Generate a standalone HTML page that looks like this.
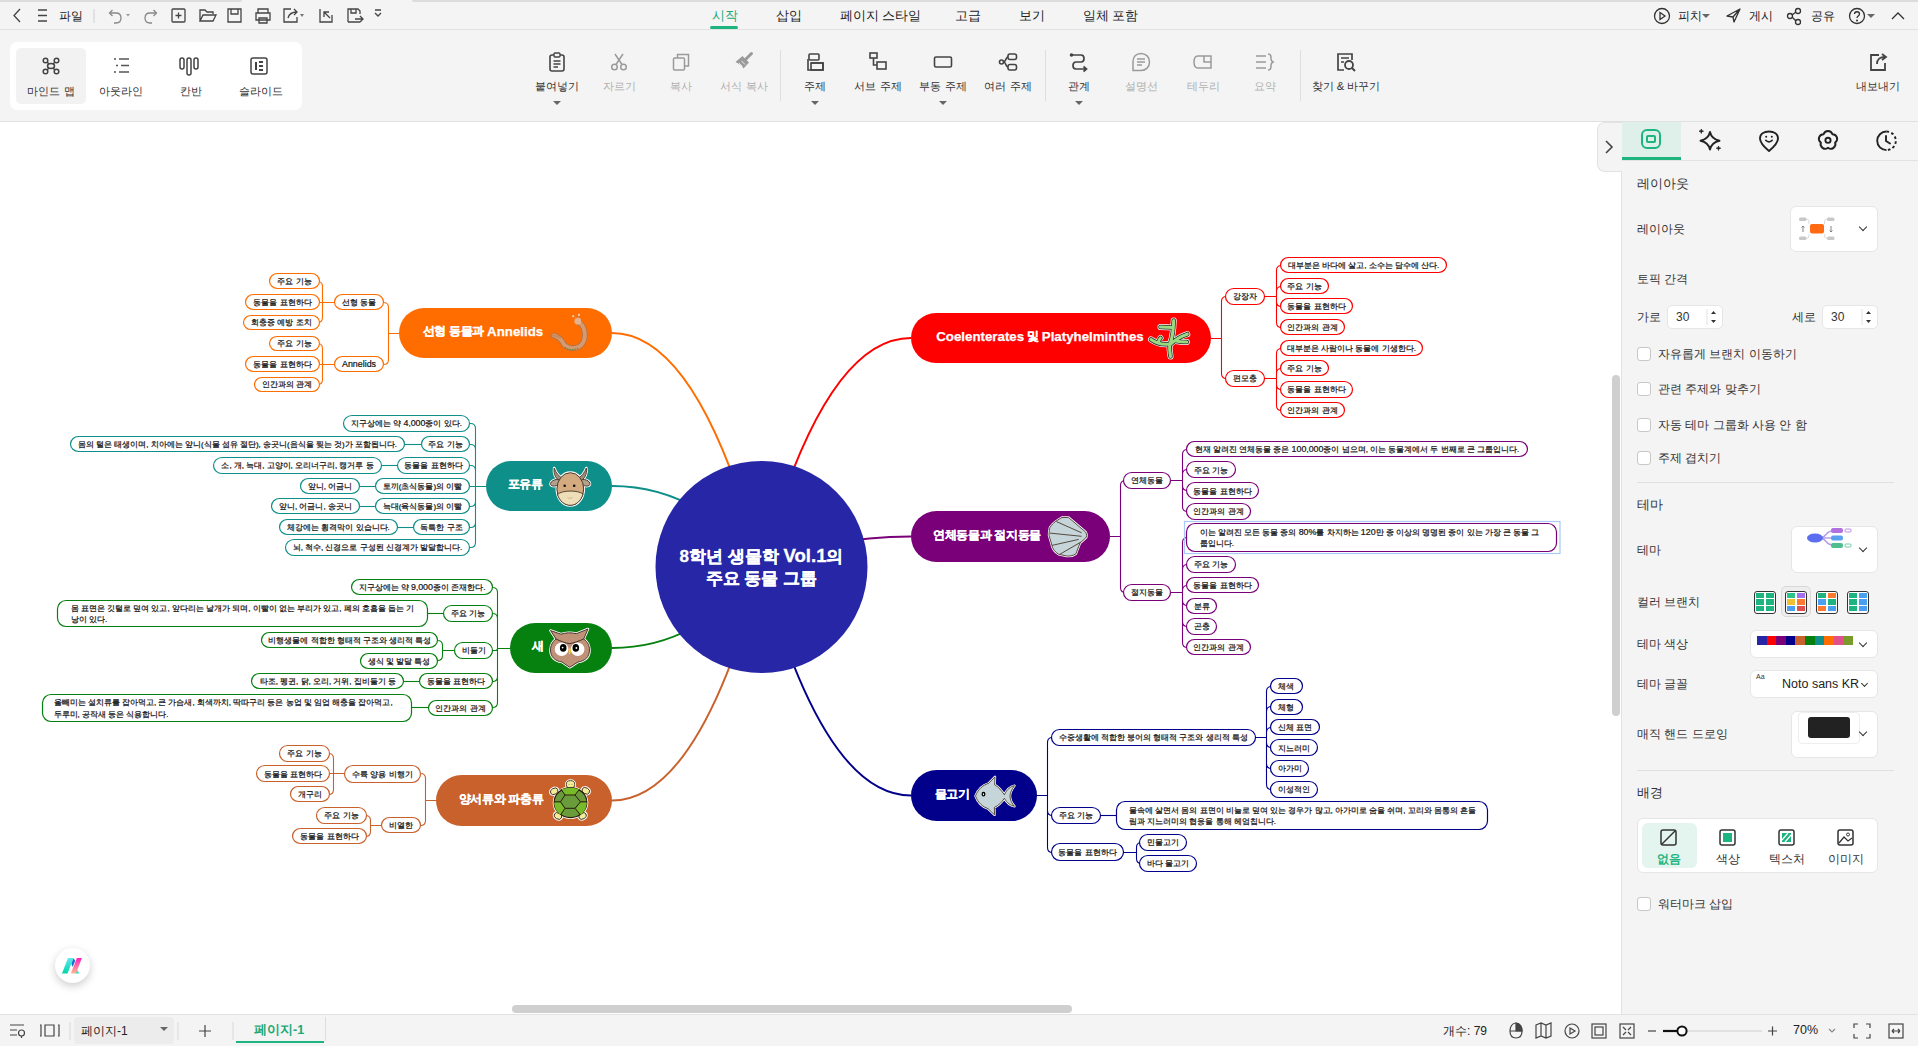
<!DOCTYPE html>
<html><head><meta charset="utf-8"><title>mindmap</title><style>
*{box-sizing:border-box;margin:0;padding:0}
html,body{width:1918px;height:1046px;overflow:hidden;background:#fff;font-family:"Liberation Sans", sans-serif;color:#333}
.abs{position:absolute}
#top{position:absolute;left:0;top:0;width:1918px;height:122px;background:#f4f4f4;border-bottom:1px solid #e0e0e0}
#topline{position:absolute;left:0;top:0;width:242px;height:2px;background:#dcdcdc;border-radius:0 0 3px 0}
#topline2{position:absolute;left:412px;top:0;width:1506px;height:2px;background:#dcdcdc;border-radius:0 0 0 3px}
#menusep{position:absolute;left:0;top:29px;width:1918px;height:1px;background:#e2e2e2}
.tab{position:absolute;top:8px;font-size:12.5px;color:#222;white-space:nowrap}
.ri{position:absolute;top:51px;width:80px;text-align:center;font-size:11.3px}
.ri .ico{display:block;margin:0 auto}
.ri .lbl{margin-top:6px;white-space:nowrap}
.caret{width:0;height:0;border-left:4px solid transparent;border-right:4px solid transparent;border-top:4px solid #666;margin:7px auto 0}
.vsep{position:absolute;top:50px;width:1px;height:51px;background:#dedede}
#panel{position:absolute;left:1621px;top:122px;width:297px;height:892px;background:#f4f4f4;border-left:1px solid #e2e2e2}
#status{position:absolute;left:0;top:1014px;width:1918px;height:32px;background:#f4f4f4;border-top:1px solid #e2e2e2}
.pl{position:absolute;font-size:12px;color:#333;white-space:nowrap}
.cb{position:absolute;width:14px;height:14px;border:1px solid #c8c8c8;border-radius:3px;background:#fff}
.box{position:absolute;background:#fff;border:1px solid #e6e6e6;border-radius:6px}
.chev{position:absolute;width:6px;height:6px;border-right:1.5px solid #333;border-bottom:1.5px solid #333;transform:rotate(45deg)}
</style></head>
<body>
<div id="top"><div id="topline"></div><div id="topline2"></div><div id="menusep"></div>
<svg class="abs" style="left:8px;top:5px" width="380" height="22" fill="none" stroke="#444" stroke-width="1.3">
<path d="M12,4 L6,10.5 L12,17"/>
<path d="M30,5 H39 M30,10.5 H39 M30,16 H39"/>
<path d="M86,4 V18" stroke="#d8d8d8"/>
<path d="M102,8 H108 C111,8 113,10 113,13 C113,16 111,18 108,18 H106" stroke="#888"/><path d="M104.5,5 L101.5,8 L104.5,11" stroke="#888"/><path d="M118,9 L122,9 L120,11.5Z" fill="#999" stroke="none"/>
<path d="M148,8 H142 C139,8 137,10 137,13 C137,16 139,18 142,18 H144" stroke="#888"/><path d="M145.5,5 L148.5,8 L145.5,11" stroke="#888"/>
<rect x="164" y="4" width="13" height="13" rx="1"/><path d="M170.5,7.5 V13.5 M167.5,10.5 H173.5"/>
<path d="M192,16 V5 H197 L199,7 H205 V9 M192,16 L195,10 H208 L205,16Z"/>
<path d="M220,4 H233 V17 H220Z M223,4 V9 H230 V4"/>
<path d="M250,8 V4 H260 V8 M248,8 H262 V15 H248Z M251,13 H259 V18 H251Z"/>
<path d="M283,4 H276 V17 H289 V12 M280,13 C281,9 283,7 289,7 M286,4 L289,7 L286,10"/><path d="M292,9 L296,9 L294,12Z" fill="#777" stroke="none"/>
<path d="M312,4 V17 H324 V10 M316,7 L322,13 M316,12 V7 H321" />
<path d="M340,17 V4 H350 L352,6 V9 M340,17 H352 M343,4 V8 H348 V4 M347,14 H355 M352,11 L355,14 L352,17"/>
<path d="M367,8 L370,11 L373,8 M367,5 H373"/>
</svg>
<div class="tab" style="left:59px;top:8px;font-size:12px">파일</div>
<div class="tab" style="left:712px;color:#1aa876">시작</div>
<div class="tab" style="left:776px;color:#222">삽입</div>
<div class="tab" style="left:840px;color:#222">페이지 스타일</div>
<div class="tab" style="left:955px;color:#222">고급</div>
<div class="tab" style="left:1019px;color:#222">보기</div>
<div class="tab" style="left:1083px;color:#222">일체 포함</div>
<div class="abs" style="left:710px;top:26px;width:28px;height:3px;border-radius:2px;background:#1db47f"></div>
<svg class="abs" style="left:1650px;top:5px" width="260" height="22" fill="none" stroke="#333" stroke-width="1.3">
<circle cx="12" cy="11" r="7.5"/><path d="M10,7.5 L15,11 L10,14.5Z"/>
<path d="M77,11 L90,4 L84,17 L83,12Z M83,12 L90,4" stroke-linejoin="round"/>
<circle cx="140" cy="11" r="2.5"/><circle cx="148" cy="6" r="2.5"/><circle cx="148" cy="17" r="2.5"/><path d="M142,10 L146,7 M142,12 L146,16"/>
<circle cx="207" cy="11" r="7.5"/><path d="M204.5,9 C204.5,6 209.5,6 209.5,9 C209.5,11 207,11 207,13"/><circle cx="207" cy="15.5" r="0.4" fill="#333"/>
<path d="M242,14 L248,8 L254,14"/>
</svg>
<svg class="abs" style="left:1702px;top:14px" width="8" height="5"><path d="M0,0 H8 L4,4Z" fill="#666"/></svg>
<svg class="abs" style="left:1867px;top:14px" width="8" height="5"><path d="M0,0 H8 L4,4Z" fill="#666"/></svg>
<div class="tab" style="left:1678px;top:8px;font-size:12px">피치</div>
<div class="tab" style="left:1749px;top:8px;font-size:12px">게시</div>
<div class="tab" style="left:1811px;top:8px;font-size:12px">공유</div>
<div class="abs" style="left:10px;top:42px;width:292px;height:68px;background:#fff;border-radius:7px"></div>
<div class="abs" style="left:16px;top:48px;width:70px;height:56px;background:#f2f2f2;border-radius:5px"></div>
<svg class="abs" style="left:30px;top:55px" width="260" height="22" fill="none" stroke="#444" stroke-width="1.5">
<ellipse cx="21" cy="11" rx="3.5" ry="2.5"/><circle cx="15.5" cy="5.5" r="2.3"/><circle cx="26.5" cy="5.5" r="2.3"/><circle cx="15.5" cy="16.5" r="2.3"/><circle cx="26.5" cy="16.5" r="2.3"/><path d="M17,7 L19,9 M25,7 L23,9 M17,15 L19,13 M25,15 L23,13"/>
<path d="M84,4 H86 M89,4 H99 M86,10.5 H88 M91,10.5 H99 M84,17 H86 M89,17 H99" stroke-width="1.7" stroke="#555"/>
<rect x="150" y="3" width="4" height="11" rx="2"/><rect x="157" y="3" width="4" height="17" rx="2"/><rect x="164" y="3" width="4" height="11" rx="2"/>
<rect x="221" y="3" width="16" height="16" rx="2"/><path d="M226,7 V15 M229,7 H233 M229,11 H233 M229,15 H233" stroke-width="2"/>
</svg>
<div class="abs" style="left:11px;top:84px;width:80px;text-align:center;font-size:11.3px;color:#333">마인드 맵</div>
<div class="abs" style="left:81px;top:84px;width:80px;text-align:center;font-size:11.3px;color:#333">아웃라인</div>
<div class="abs" style="left:151px;top:84px;width:80px;text-align:center;font-size:11.3px;color:#333">칸반</div>
<div class="abs" style="left:221px;top:84px;width:80px;text-align:center;font-size:11.3px;color:#333">슬라이드</div>
<div class="ri" style="left:517px;color:#333"><svg width="22" height="22" viewBox="0 0 22 22" class="ico" style="stroke:#444"><rect x="4" y="4" width="14" height="16" rx="2" fill="none" stroke-width="1.6"/><rect x="8" y="2" width="6" height="4" rx="1" fill="#f4f4f4" stroke-width="1.4"/><path d="M7.5,10 H14.5 M7.5,13 H14.5 M7.5,16 H12" stroke-width="1.4"/></svg><div class="lbl">붙여넣기</div><div class="caret"></div></div>
<div class="ri" style="left:579px;color:#b0b0b0"><svg width="22" height="22" viewBox="0 0 22 22" class="ico" style="stroke:#9a9a9a"><circle cx="6.5" cy="16" r="2.8" fill="none" stroke-width="1.5"/><circle cx="15.5" cy="16" r="2.8" fill="none" stroke-width="1.5"/><path d="M8,13.5 L15,3 M14,13.5 L7,3" stroke-width="1.5"/></svg><div class="lbl">자르기</div></div>
<div class="ri" style="left:641px;color:#b0b0b0"><svg width="22" height="22" viewBox="0 0 22 22" class="ico" style="stroke:#9a9a9a"><rect x="3.5" y="7" width="11" height="12" rx="1" fill="none" stroke-width="1.5"/><path d="M7.5,7 V3.5 H18.5 V15 H14.5" fill="none" stroke-width="1.5"/></svg><div class="lbl">복사</div></div>
<div class="ri" style="left:704px;color:#b0b0b0"><svg width="22" height="22" viewBox="0 0 22 22" class="ico" style="stroke:#9a9a9a"><path d="M2.5,11 L9.5,5 L16,11.5 L10.5,17.5 C9,15 6.5,13 2.5,11Z" fill="#9a9a9a" stroke="none"/><path d="M13,8 L18.5,2.5" stroke="#9a9a9a" stroke-width="3" stroke-linecap="round"/><path d="M6,12 L9.5,15.5 M8.5,10 L12,13.5" stroke="#f4f4f4" stroke-width="0.9"/></svg><div class="lbl">서식 복사</div></div>
<div class="ri" style="left:775px;color:#333"><svg width="22" height="22" viewBox="0 0 22 22" class="ico" style="stroke:#444"><rect x="5" y="3" width="10" height="6" rx="1" fill="none" stroke-width="1.6"/><path d="M4,8 V19 H19 V12 H7" fill="none" stroke-width="1.6"/><rect x="7" y="12" width="12" height="7" fill="none" stroke-width="1.6"/></svg><div class="lbl">주제</div><div class="caret"></div></div>
<div class="ri" style="left:838px;color:#333"><svg width="22" height="22" viewBox="0 0 22 22" class="ico" style="stroke:#444"><rect x="3" y="2" width="7" height="5" fill="none" stroke-width="1.6"/><path d="M6.5,7 V14 H10" fill="none" stroke-width="1.6"/><rect x="10" y="11" width="9" height="7" fill="none" stroke-width="1.6"/></svg><div class="lbl">서브 주제</div></div>
<div class="ri" style="left:903px;color:#333"><svg width="22" height="22" viewBox="0 0 22 22" class="ico" style="stroke:#444"><rect x="2.5" y="6" width="17" height="10" rx="1.5" fill="none" stroke-width="1.6"/></svg><div class="lbl">부동 주제</div><div class="caret"></div></div>
<div class="ri" style="left:968px;color:#333"><svg width="22" height="22" viewBox="0 0 22 22" class="ico" style="stroke:#444"><rect x="11" y="3" width="8.5" height="5.5" rx="2" fill="none" stroke-width="1.6"/><rect x="11" y="13.5" width="8.5" height="5.5" rx="2" fill="none" stroke-width="1.6"/><circle cx="4.5" cy="11" r="2" fill="none" stroke-width="1.6"/><path d="M6.5,11 C9,11 9,5.8 11,5.8 M6.5,11 C9,11 9,16.2 11,16.2" fill="none" stroke-width="1.6"/></svg><div class="lbl">여러 주제</div></div>
<div class="ri" style="left:1039px;color:#333"><svg width="22" height="22" viewBox="0 0 22 22" class="ico" style="stroke:#444"><circle cx="3.5" cy="4" r="1.8" fill="#444" stroke="none"/><path d="M3.5,4 H13 C17,4 17,11 13,11 H8 C4,11 4,18 8,18 H18 M15.5,15.5 L18.5,18 L15.5,20.5" fill="none" stroke-width="1.7"/></svg><div class="lbl">관계</div><div class="caret"></div></div>
<div class="ri" style="left:1101px;color:#b0b0b0"><svg width="22" height="22" viewBox="0 0 22 22" class="ico" style="stroke:#9a9a9a"><path d="M11,2.5 C16,2.5 19.5,6 19.5,11 C19.5,16 16,19.5 11,19.5 H3 V11 C3,6 6,2.5 11,2.5Z" fill="none" stroke-width="1.5"/><path d="M7,8 H15 M7,11 H15 M7,14 H12" stroke-width="1.4"/></svg><div class="lbl">설명선</div></div>
<div class="ri" style="left:1163px;color:#b0b0b0"><svg width="22" height="22" viewBox="0 0 22 22" class="ico" style="stroke:#9a9a9a"><path d="M6,5 H19 V17 H6 C3,17 2,14 2,11 C2,8 3,5 6,5Z M12,5 V11 H19" fill="none" stroke-width="1.5"/></svg><div class="lbl">테두리</div></div>
<div class="ri" style="left:1225px;color:#b0b0b0"><svg width="22" height="22" viewBox="0 0 22 22" class="ico" style="stroke:#9a9a9a"><path d="M2,5 H12 M2,11 H12 M2,17 H12 M14,3 C17,3 17,5 17,8 C17,10 19,11 19,11 C19,11 17,12 17,14 C17,17 17,19 14,19" fill="none" stroke-width="1.5"/></svg><div class="lbl">요약</div></div>
<div class="ri" style="left:1306px;color:#333"><svg width="22" height="22" viewBox="0 0 22 22" class="ico" style="stroke:#444"><path d="M17,9 V3 H3 V19 H9" fill="none" stroke-width="1.7"/><path d="M6,7 H14 M6,11 H9" stroke-width="1.6"/><circle cx="14" cy="14" r="4" fill="none" stroke-width="1.8"/><path d="M17,17 L20,20" stroke-width="2"/></svg><div class="lbl">찾기 &amp; 바꾸기</div></div><div class="ri" style="left:1838px;color:#333"><svg width="22" height="22" viewBox="0 0 22 22" class="ico" style="stroke:#444"><path d="M12,4 H4 V19 H18 V12" fill="none" stroke-width="1.8"/><path d="M10,13 C10,8 13,6 18,6 M15,3 L19,6 L15,9" fill="none" stroke-width="1.8"/></svg><div class="lbl">내보내기</div></div><div class="vsep" style="left:780px"></div><div class="vsep" style="left:1045px"></div><div class="vsep" style="left:1300px"></div></div>
<svg class="abs" style="left:0;top:0" width="1918" height="1046" font-family='"Liberation Sans", sans-serif' fill="#161616" stroke-width="0">
<path d="M761.5,567 Q698.7,333.0 612,333.0" fill="none" stroke="#ff6d00" stroke-width="2"/>
<path d="M761.5,567 Q698.7,486.0 612,486.0" fill="none" stroke="#0e8f8a" stroke-width="2"/>
<path d="M761.5,567 Q698.7,648.0 612,648.0" fill="none" stroke="#06800f" stroke-width="2"/>
<path d="M761.5,567 Q698.7,800.5 612,800.5" fill="none" stroke="#c8612c" stroke-width="2"/>
<path d="M761.5,567 Q824.3,338.0 911,338.0" fill="none" stroke="#ff0000" stroke-width="2"/>
<path d="M761.5,567 Q824.3,536.5 911,536.5" fill="none" stroke="#7a007a" stroke-width="2"/>
<path d="M761.5,567 Q824.3,795.5 911,795.5" fill="none" stroke="#02008a" stroke-width="2"/>
<circle cx="761.5" cy="567" r="106" fill="#2626a6"/>
<text x="761.5" y="561.5" text-anchor="middle" font-size="17" font-weight="bold" fill="#fff" stroke="#fff" stroke-width="0.3">8학년 생물학 <tspan font-size="18.6">Vol.1</tspan>의</text>
<text x="761.5" y="583.5" text-anchor="middle" font-size="17" font-weight="bold" fill="#fff" stroke="#fff" stroke-width="0.3">주요 동물 그룹</text>
<rect x="399" y="308" width="213" height="50" rx="25.0" fill="#ff6d00"/>
<text x="483" y="335.0" text-anchor="middle" font-size="12" font-weight="bold" fill="#fff" stroke="#fff" stroke-width="0.25" letter-spacing="-0.35">선형 동물과 <tspan font-size="13.3" letter-spacing="0" baseline-shift="-1.3">Annelids</tspan></text>
<path d="M399.0,333.5 L388.5,333.5 M388.5,333.5 L388.5,307.5 Q388.5,302.5 383.5,302.5 L384.0,302.5 M388.5,333.5 L388.5,359.5 Q388.5,364.5 383.5,364.5 L384.0,364.5" fill="none" stroke="#ff6d00" stroke-width="1.1"/>
<path d="M334.0,302.5 L322.5,302.5 M322.5,302.5 L322.5,286.5 Q322.5,281.5 317.5,281.5 L320.0,281.5 M322.5,302.5 L320.0,302.5 M322.5,302.5 L322.5,317.5 Q322.5,322.5 317.5,322.5 L320.0,322.5" fill="none" stroke="#ff6d00" stroke-width="1.1"/>
<rect x="334.5" y="294.5" width="49.0" height="15.0" rx="8.0" fill="#fff" stroke="#ff6d00" stroke-width="1.2"/>
<text x="359.0" y="304.9" text-anchor="middle" font-size="7.9" stroke="#111" stroke-width="0.22">선형 동물</text>
<rect x="269.5" y="273.5" width="50.0" height="15.0" rx="8.0" fill="#fff" stroke="#ff6d00" stroke-width="1.2"/>
<text x="294.5" y="283.9" text-anchor="middle" font-size="7.9" stroke="#111" stroke-width="0.22">주요 기능</text>
<rect x="245.5" y="294.5" width="74.0" height="15.0" rx="8.0" fill="#fff" stroke="#ff6d00" stroke-width="1.2"/>
<text x="282.5" y="304.9" text-anchor="middle" font-size="7.9" stroke="#111" stroke-width="0.22">동물을 표현하다</text>
<rect x="243.5" y="315.5" width="76.0" height="14.0" rx="7.5" fill="#fff" stroke="#ff6d00" stroke-width="1.2"/>
<text x="281.5" y="325.4" text-anchor="middle" font-size="7.9" stroke="#111" stroke-width="0.22">회충증 예방 조치</text>
<path d="M334.0,364.5 L322.5,364.5 M322.5,364.5 L322.5,348.5 Q322.5,343.5 317.5,343.5 L320.0,343.5 M322.5,364.5 L320.0,364.5 M322.5,364.5 L322.5,379.5 Q322.5,384.5 317.5,384.5 L320.0,384.5" fill="none" stroke="#ff6d00" stroke-width="1.1"/>
<rect x="334.5" y="356.5" width="49.0" height="15.0" rx="8.0" fill="#fff" stroke="#ff6d00" stroke-width="1.2"/>
<text x="359.0" y="366.9" text-anchor="middle" font-size="7.9" stroke="#111" stroke-width="0.22"><tspan font-size="8.9">Annelids</tspan></text>
<rect x="269.5" y="336.5" width="50.0" height="14.0" rx="7.5" fill="#fff" stroke="#ff6d00" stroke-width="1.2"/>
<text x="294.5" y="346.4" text-anchor="middle" font-size="7.9" stroke="#111" stroke-width="0.22">주요 기능</text>
<rect x="245.5" y="356.5" width="74.0" height="15.0" rx="8.0" fill="#fff" stroke="#ff6d00" stroke-width="1.2"/>
<text x="282.5" y="366.9" text-anchor="middle" font-size="7.9" stroke="#111" stroke-width="0.22">동물을 표현하다</text>
<rect x="254.5" y="377.5" width="65.0" height="14.0" rx="7.5" fill="#fff" stroke="#ff6d00" stroke-width="1.2"/>
<text x="287.0" y="387.4" text-anchor="middle" font-size="7.9" stroke="#111" stroke-width="0.22">인간과의 관계</text>
<g transform="translate(552,317)">
<path d="M1.5,18.5 C6,19.5 9,22 11,26 C14,31 22,33 28,29 C33,25 34,18 31.5,11 C30.5,8 28,6 26,4" fill="none" stroke="#b0724a" stroke-width="5.6" stroke-linecap="round"/>
<path d="M1.5,18.5 C6,19.5 9,22 11,26 C14,31 22,33 28,29 C33,25 34,18 31.5,11 C30.5,8 28,6 26,4" fill="none" stroke="#d59a70" stroke-width="3.9" stroke-linecap="round" stroke-dasharray="2.6 0.8"/>
<path d="M1,18.3 C4,18.8 6,19.5 8,20.5" stroke="#c98a5e" stroke-width="2.2" stroke-linecap="round"/>
<circle cx="25.8" cy="4.2" r="3.4" fill="#e6b391"/>
<path d="M24.5,1.5 L21.5,-0.8 M26.5,1 L27,-2" stroke="#c98a5e" stroke-width="0.8"/>
<circle cx="21.2" cy="-0.8" r="1.1" fill="#f4d0b8"/><circle cx="27" cy="-2.2" r="1.1" fill="#f4d0b8"/>
<path d="M13,30.5 C17,33 22,33.5 26,31" stroke="#4d8a3a" stroke-width="1" fill="none" stroke-dasharray="1.5 1"/>
</g>
<rect x="486" y="461" width="126" height="50" rx="25.0" fill="#0e8f8a"/>
<text x="525" y="488.0" text-anchor="middle" font-size="12" font-weight="bold" fill="#fff" stroke="#fff" stroke-width="0.25" letter-spacing="-0.35">포유류</text>
<path d="M486.0,486.5 L475.5,486.5 M475.5,486.5 L475.5,428.5 Q475.5,423.5 470.5,423.5 L470.0,423.5 M475.5,486.5 L475.5,449.5 Q475.5,444.5 470.5,444.5 L470.0,444.5 M475.5,486.5 L475.5,470.5 Q475.5,465.5 470.5,465.5 L470.0,465.5 M475.5,486.5 L470.0,486.5 M475.5,486.5 L475.5,501.5 Q475.5,506.5 470.5,506.5 L470.0,506.5 M475.5,486.5 L475.5,522.5 Q475.5,527.5 470.5,527.5 L470.0,527.5 M475.5,486.5 L475.5,542.5 Q475.5,547.5 470.5,547.5 L470.0,547.5" fill="none" stroke="#0e8f8a" stroke-width="1.1"/>
<rect x="343.5" y="415.5" width="126.0" height="16.0" rx="8.5" fill="#fff" stroke="#0e8f8a" stroke-width="1.2"/>
<text x="406.5" y="426.4" text-anchor="middle" font-size="7.9" stroke="#111" stroke-width="0.22">지구상에는 약 <tspan font-size="8.9">4</tspan>,<tspan font-size="8.9">000</tspan>종이 있다.</text>
<path d="M421,444.5 L405,444.5" stroke="#0e8f8a" stroke-width="1.1"/>
<rect x="421.5" y="436.5" width="48.0" height="15.0" rx="8.0" fill="#fff" stroke="#0e8f8a" stroke-width="1.2"/>
<text x="445.5" y="446.9" text-anchor="middle" font-size="7.9" stroke="#111" stroke-width="0.22">주요 기능</text>
<rect x="70.5" y="436.5" width="334.0" height="15.0" rx="8.0" fill="#fff" stroke="#0e8f8a" stroke-width="1.2"/>
<text x="237.5" y="446.9" text-anchor="middle" font-size="7.9" stroke="#111" stroke-width="0.22">몸의 털은 태생이며, 치아에는 앞니(식물 섬유 절단), 송곳니(음식을 찢는 것)가 포함됩니다.</text>
<path d="M397,465.5 L382,465.5" stroke="#0e8f8a" stroke-width="1.1"/>
<rect x="397.5" y="457.5" width="72.0" height="16.0" rx="8.5" fill="#fff" stroke="#0e8f8a" stroke-width="1.2"/>
<text x="433.5" y="468.4" text-anchor="middle" font-size="7.9" stroke="#111" stroke-width="0.22">동물을 표현하다</text>
<rect x="213.5" y="457.5" width="168.0" height="16.0" rx="8.5" fill="#fff" stroke="#0e8f8a" stroke-width="1.2"/>
<text x="297.5" y="468.4" text-anchor="middle" font-size="7.9" stroke="#111" stroke-width="0.22">소, 개, 늑대, 고양이, 오리너구리, 캥거루 등</text>
<path d="M375,486.5 L360,486.5" stroke="#0e8f8a" stroke-width="1.1"/>
<rect x="375.5" y="478.5" width="94.0" height="15.0" rx="8.0" fill="#fff" stroke="#0e8f8a" stroke-width="1.2"/>
<text x="422.5" y="488.9" text-anchor="middle" font-size="7.9" stroke="#111" stroke-width="0.22">토끼(초식동물)의 이빨</text>
<rect x="300.5" y="478.5" width="59.0" height="15.0" rx="8.0" fill="#fff" stroke="#0e8f8a" stroke-width="1.2"/>
<text x="330.0" y="488.9" text-anchor="middle" font-size="7.9" stroke="#111" stroke-width="0.22">앞니, 어금니</text>
<path d="M375,506.5 L360,506.5" stroke="#0e8f8a" stroke-width="1.1"/>
<rect x="375.5" y="498.5" width="94.0" height="15.0" rx="8.0" fill="#fff" stroke="#0e8f8a" stroke-width="1.2"/>
<text x="422.5" y="508.9" text-anchor="middle" font-size="7.9" stroke="#111" stroke-width="0.22">늑대(육식동물)의 이빨</text>
<rect x="271.5" y="498.5" width="88.0" height="15.0" rx="8.0" fill="#fff" stroke="#0e8f8a" stroke-width="1.2"/>
<text x="315.5" y="508.9" text-anchor="middle" font-size="7.9" stroke="#111" stroke-width="0.22">앞니, 어금니, 송곳니</text>
<path d="M413,527.5 L398,527.5" stroke="#0e8f8a" stroke-width="1.1"/>
<rect x="413.5" y="519.5" width="56.0" height="15.0" rx="8.0" fill="#fff" stroke="#0e8f8a" stroke-width="1.2"/>
<text x="441.5" y="529.9" text-anchor="middle" font-size="7.9" stroke="#111" stroke-width="0.22">독특한 구조</text>
<rect x="279.5" y="519.5" width="118.0" height="15.0" rx="8.0" fill="#fff" stroke="#0e8f8a" stroke-width="1.2"/>
<text x="338.5" y="529.9" text-anchor="middle" font-size="7.9" stroke="#111" stroke-width="0.22">체강에는 횡격막이 있습니다.</text>
<rect x="285.5" y="539.5" width="184.0" height="16.0" rx="8.5" fill="#fff" stroke="#0e8f8a" stroke-width="1.2"/>
<text x="377.5" y="550.4" text-anchor="middle" font-size="7.9" stroke="#111" stroke-width="0.22">뇌, 척수, 신경으로 구성된 신경계가 발달합니다.</text>
<g transform="translate(550,467)" stroke-linejoin="round">
<g stroke="#fff" stroke-width="2.6">
<path d="M4.2,1 C3,7 6,12 11,15 L14,12 C9,10 6,6 4.2,1Z"/><path d="M36.3,1 C37.5,7 34.5,12 29.5,15 L26.5,12 C31.5,10 34.5,6 36.3,1Z"/>
<ellipse cx="5.3" cy="15.8" rx="5" ry="3" transform="rotate(-20 5.3 15.8)"/><ellipse cx="35.2" cy="15.8" rx="5" ry="3" transform="rotate(20 35.2 15.8)"/>
<ellipse cx="20.3" cy="22" rx="13.5" ry="16.4"/></g>
<path d="M4.2,1 C3,7 6,12 11,15 L14,12 C9,10 6,6 4.2,1Z" fill="#9e8e7c" stroke="#4a3828" stroke-width="0.9"/>
<path d="M36.3,1 C37.5,7 34.5,12 29.5,15 L26.5,12 C31.5,10 34.5,6 36.3,1Z" fill="#9e8e7c" stroke="#4a3828" stroke-width="0.9"/>
<ellipse cx="5.3" cy="15.8" rx="5" ry="3" transform="rotate(-20 5.3 15.8)" fill="#b2a18c" stroke="#4a3828" stroke-width="0.9"/>
<ellipse cx="35.2" cy="15.8" rx="5" ry="3" transform="rotate(20 35.2 15.8)" fill="#b2a18c" stroke="#4a3828" stroke-width="0.9"/>
<ellipse cx="20.3" cy="22" rx="13.4" ry="16.3" fill="#d4aa80" stroke="#4a3828" stroke-width="1"/>
<path d="M7.5,27.5 C12,23 28,23 33,27 C31,34 26,38.3 20.3,38.3 C14.5,38.3 9.5,34 7.5,27.5Z" fill="#efdfb8" stroke="#4a3828" stroke-width="0.9"/>
<circle cx="14.7" cy="18.8" r="1.3" fill="#111"/><circle cx="24.2" cy="18.8" r="1.3" fill="#111"/>
<path d="M17.5,30.5 C19,31.5 21,31.5 22.5,30.5" stroke="#b8a070" stroke-width="0.6" fill="none"/>
</g>
<rect x="510" y="623" width="102" height="50" rx="25.0" fill="#06800f"/>
<text x="538" y="650.0" text-anchor="middle" font-size="12" font-weight="bold" fill="#fff" stroke="#fff" stroke-width="0.25" letter-spacing="-0.35">새</text>
<path d="M510.0,648.5 L497.5,648.5 M497.5,648.5 L497.5,592.5 Q497.5,587.5 492.5,587.5 L493.0,587.5 M497.5,648.5 L497.5,618.5 Q497.5,613.5 492.5,613.5 L493.0,613.5 M497.5,648.5 L497.5,648.5 Q497.5,650.5 495.5,650.5 L493.0,650.5 M497.5,648.5 L497.5,676.5 Q497.5,681.5 492.5,681.5 L493.0,681.5 M497.5,648.5 L497.5,702.5 Q497.5,707.5 492.5,707.5 L493.0,707.5" fill="none" stroke="#06800f" stroke-width="1.1"/>
<rect x="351.5" y="579.5" width="141.0" height="15.0" rx="8.0" fill="#fff" stroke="#06800f" stroke-width="1.2"/>
<text x="422.0" y="589.9" text-anchor="middle" font-size="7.9" stroke="#111" stroke-width="0.22">지구상에는 약 <tspan font-size="8.9">9</tspan>,<tspan font-size="8.9">000</tspan>종이 존재한다.</text>
<path d="M443.5,613.5 L428,613.5" stroke="#06800f" stroke-width="1.1"/>
<rect x="443.5" y="605.5" width="49.0" height="16.0" rx="8.2" fill="#fff" stroke="#06800f" stroke-width="1.2"/>
<text x="468.2" y="616.1" text-anchor="middle" font-size="7.9" stroke="#111" stroke-width="0.22">주요 기능</text>
<rect x="57.5" y="600.5" width="370.0" height="26.0" rx="8.5" fill="#fff" stroke="#06800f" stroke-width="1.2"/>
<text x="70.7" y="610.5" font-size="7.9" stroke="#111" stroke-width="0.22">몸 표면은 깃털로 덮여 있고, 앞다리는 날개가 되며, 이빨이 없는 부리가 있고, 폐의 호흡을 돕는 기</text>
<text x="70.7" y="622.3" font-size="7.9" stroke="#111" stroke-width="0.22">낭이 있다.</text>
<path d="M454.0,650.5 L442.5,650.5 M442.5,650.5 L442.5,645.5 Q442.5,640.5 437.5,640.5 L438.0,640.5 M442.5,650.5 L442.5,655.5 Q442.5,660.5 437.5,660.5 L438.0,660.5" fill="none" stroke="#06800f" stroke-width="1.1"/>
<rect x="454.5" y="642.5" width="38.0" height="16.0" rx="8.0" fill="#fff" stroke="#06800f" stroke-width="1.2"/>
<text x="473.5" y="653.4" text-anchor="middle" font-size="7.9" stroke="#111" stroke-width="0.22">비둘기</text>
<rect x="261.5" y="632.5" width="176.0" height="15.0" rx="7.8" fill="#fff" stroke="#06800f" stroke-width="1.2"/>
<text x="349.8" y="643.1" text-anchor="middle" font-size="7.9" stroke="#111" stroke-width="0.22">비행생물에 적합한 형태적 구조와 생리적 특성</text>
<rect x="360.5" y="653.5" width="77.0" height="15.0" rx="7.8" fill="#fff" stroke="#06800f" stroke-width="1.2"/>
<text x="399.2" y="663.6" text-anchor="middle" font-size="7.9" stroke="#111" stroke-width="0.22">생식 및 발달 특성</text>
<path d="M419,681.5 L404,681.5" stroke="#06800f" stroke-width="1.1"/>
<rect x="419.5" y="673.5" width="73.0" height="15.0" rx="8.0" fill="#fff" stroke="#06800f" stroke-width="1.2"/>
<text x="456.0" y="683.9" text-anchor="middle" font-size="7.9" stroke="#111" stroke-width="0.22">동물을 표현하다</text>
<rect x="251.5" y="673.5" width="152.0" height="15.0" rx="8.0" fill="#fff" stroke="#06800f" stroke-width="1.2"/>
<text x="327.8" y="683.9" text-anchor="middle" font-size="7.9" stroke="#111" stroke-width="0.22">타조, 펭귄, 닭, 오리, 거위, 집비둘기 등</text>
<path d="M428,707.5 L412,707.5" stroke="#06800f" stroke-width="1.1"/>
<rect x="428.5" y="700.5" width="64.0" height="15.0" rx="7.8" fill="#fff" stroke="#06800f" stroke-width="1.2"/>
<text x="460.5" y="710.6" text-anchor="middle" font-size="7.9" stroke="#111" stroke-width="0.22">인간과의 관계</text>
<rect x="42.5" y="694.5" width="369.0" height="27.0" rx="8.5" fill="#fff" stroke="#06800f" stroke-width="1.2"/>
<text x="53.5" y="705.2" font-size="7.9" stroke="#111" stroke-width="0.22">올빼미는 설치류를 잡아먹고, 큰 가슴새, 회색까치, 딱따구리 등은 농업 및 임업 해충을 잡아먹고,</text>
<text x="53.5" y="717.0" font-size="7.9" stroke="#111" stroke-width="0.22">두루미, 공작새 등은 식용합니다.</text>
<g transform="translate(550,628)" stroke-linejoin="round">
<path d="M0.5,2.5 L11,6.2 C15,4.6 22,4.3 26.3,5.7 L38,1 L33.7,11 C38,14 39.5,18 39.5,22 C39.5,29 35,33 28,34 L19.7,39.3 L12,34 C5,33 0.5,29 0.5,22 C0.5,18 2,14 6,11 Z" fill="#fff" stroke="#fff" stroke-width="2.6"/>
<path d="M0.5,2.5 L11,6.2 C15,4.6 22,4.3 26.3,5.7 L38,1 L33.7,11 C38,14 39.5,18 39.5,22 C39.5,29 35,33 28,34 L19.7,39.3 L12,34 C5,33 0.5,29 0.5,22 C0.5,18 2,14 6,11 Z" fill="#c09277" stroke="#3a2a20" stroke-width="0.9"/>
<circle cx="11.6" cy="21.2" r="6.8" fill="#fff"/><circle cx="27.6" cy="21.2" r="6.8" fill="#fff"/>
<ellipse cx="13.2" cy="19.9" rx="3.3" ry="3.8" fill="#000"/><ellipse cx="25.8" cy="19.9" rx="3.3" ry="3.8" fill="#000"/>
<circle cx="12.6" cy="19.6" r="0.9" fill="#fff"/><circle cx="26.4" cy="20" r="0.9" fill="#fff"/>
<path d="M19.7,19.4 C21,20.5 21,25 19.7,26.7 C18.4,25 18.4,20.5 19.7,19.4Z" fill="#f5d21a"/>
<path d="M6,11 C10,13 15,15 19.7,15.7 C24,15 29,13 33.7,11" fill="none" stroke="#3a2a20" stroke-width="0.9"/>
</g>
<rect x="436" y="775" width="176" height="51" rx="25.5" fill="#c8612c"/>
<text x="501" y="802.5" text-anchor="middle" font-size="12" font-weight="bold" fill="#fff" stroke="#fff" stroke-width="0.25" letter-spacing="-0.35">양서류와 파충류</text>
<path d="M436.0,800.5 L425.5,800.5 M425.5,800.5 L425.5,778.5 Q425.5,773.5 420.5,773.5 L421.0,773.5 M425.5,800.5 L425.5,820.5 Q425.5,825.5 420.5,825.5 L421.0,825.5" fill="none" stroke="#c8612c" stroke-width="1.1"/>
<path d="M344.0,773.5 L333.5,773.5 M333.5,773.5 L333.5,758.5 Q333.5,753.5 328.5,753.5 L330.0,753.5 M333.5,773.5 L330.0,773.5 M333.5,773.5 L333.5,789.5 Q333.5,794.5 328.5,794.5 L330.0,794.5" fill="none" stroke="#c8612c" stroke-width="1.1"/>
<rect x="344.5" y="765.5" width="76.0" height="17.0" rx="8.5" fill="#fff" stroke="#c8612c" stroke-width="1.2"/>
<text x="382.5" y="776.6" text-anchor="middle" font-size="7.9" stroke="#111" stroke-width="0.22">수륙 양용 비행기</text>
<rect x="279.5" y="745.5" width="50.0" height="16.0" rx="8.0" fill="#fff" stroke="#c8612c" stroke-width="1.2"/>
<text x="304.5" y="756.4" text-anchor="middle" font-size="7.9" stroke="#111" stroke-width="0.22">주요 기능</text>
<rect x="256.5" y="765.5" width="73.0" height="16.0" rx="8.2" fill="#fff" stroke="#c8612c" stroke-width="1.2"/>
<text x="293.0" y="776.6" text-anchor="middle" font-size="7.9" stroke="#111" stroke-width="0.22">동물을 표현하다</text>
<rect x="290.5" y="786.5" width="39.0" height="15.0" rx="7.8" fill="#fff" stroke="#c8612c" stroke-width="1.2"/>
<text x="310.2" y="797.1" text-anchor="middle" font-size="7.9" stroke="#111" stroke-width="0.22">개구리</text>
<path d="M381.0,825.5 L370.5,825.5 M370.5,825.5 L370.5,820.5 Q370.5,815.5 365.5,815.5 L366.5,815.5 M370.5,825.5 L370.5,831.5 Q370.5,836.5 365.5,836.5 L366.5,836.5" fill="none" stroke="#c8612c" stroke-width="1.1"/>
<rect x="381.5" y="817.5" width="39.0" height="15.0" rx="8.0" fill="#fff" stroke="#c8612c" stroke-width="1.2"/>
<text x="401.0" y="827.9" text-anchor="middle" font-size="7.9" stroke="#111" stroke-width="0.22">비열한</text>
<rect x="316.5" y="807.5" width="50.0" height="16.0" rx="8.0" fill="#fff" stroke="#c8612c" stroke-width="1.2"/>
<text x="341.5" y="818.4" text-anchor="middle" font-size="7.9" stroke="#111" stroke-width="0.22">주요 기능</text>
<rect x="292.5" y="828.5" width="74.0" height="15.0" rx="8.0" fill="#fff" stroke="#c8612c" stroke-width="1.2"/>
<text x="329.5" y="838.9" text-anchor="middle" font-size="7.9" stroke="#111" stroke-width="0.22">동물을 표현하다</text>
<g transform="translate(550,780)">
<g fill="#fff" stroke="#fff" stroke-width="2.8"><ellipse cx="20.5" cy="4.4" rx="4.2" ry="3.8"/><ellipse cx="4.2" cy="11.3" rx="4" ry="3" transform="rotate(-30 4.2 11.3)"/><ellipse cx="35.8" cy="10.8" rx="4" ry="3" transform="rotate(30 35.8 10.8)"/><ellipse cx="7.9" cy="36" rx="4" ry="3" transform="rotate(30 7.9 36)"/><ellipse cx="32.6" cy="36" rx="4" ry="3" transform="rotate(-30 32.6 36)"/><ellipse cx="20.5" cy="22.6" rx="16.4" ry="15"/></g>
<g fill="#f3ec9a" stroke="#2a1a0a" stroke-width="0.8"><ellipse cx="20.5" cy="4.4" rx="4.2" ry="3.8"/><ellipse cx="4.2" cy="11.3" rx="4" ry="3" transform="rotate(-30 4.2 11.3)"/><ellipse cx="35.8" cy="10.8" rx="4" ry="3" transform="rotate(30 35.8 10.8)"/><ellipse cx="7.9" cy="36" rx="4" ry="3" transform="rotate(30 7.9 36)"/><ellipse cx="32.6" cy="36" rx="4" ry="3" transform="rotate(-30 32.6 36)"/></g>
<ellipse cx="20.5" cy="22.6" rx="16.4" ry="15" fill="#6a9c3c" stroke="#2a1a0a" stroke-width="1.1"/>
<path d="M11.5,9.5 C17,7 24,7 29.5,9.5 L25,15 L15,15Z" fill="#78bb2a"/>
<path d="M4.3,22.6 L10.5,22.6 L15,29.3 L10.5,35 C6.5,32 4.3,27.5 4.3,22.6Z" fill="#78bb2a"/>
<path d="M36.7,22.6 L30.5,22.6 L26,29.3 L30.5,35 C34.5,32 36.7,27.5 36.7,22.6Z" fill="#78bb2a"/>
<path d="M11,9.2 L15,15 L25,15 L29.5,9.2 M15,15 L10.5,21.8 L15,28.3 L25,28.3 L30.5,21.8 L25,15 M15,28.3 L10.5,35 M25,28.3 L30.5,35 M4,21.8 L10.5,21.8 M30.5,21.8 L37,21.8" fill="none" stroke="#2a1a0a" stroke-width="1"/>
<path d="M18.5,4.5 H19.5 M21.5,4.5 H22.5" stroke="#8a8040" stroke-width="0.6"/>
</g>
<rect x="911" y="313" width="300" height="50" rx="25.0" fill="#ff0000"/>
<text x="1040" y="340.0" text-anchor="middle" font-size="12" font-weight="bold" fill="#fff" stroke="#fff" stroke-width="0.25" letter-spacing="-0.35"><tspan font-size="13.3" letter-spacing="0" baseline-shift="-1.3">Coelenterates</tspan> 및 <tspan font-size="13.3" letter-spacing="0" baseline-shift="-1.3">Platyhelminthes</tspan></text>
<path d="M1211.0,338.5 L1221.5,338.5 M1221.5,338.5 L1221.5,301.5 Q1221.5,296.5 1226.5,296.5 L1225.5,296.5 M1221.5,338.5 L1221.5,373.5 Q1221.5,378.5 1226.5,378.5 L1225.5,378.5" fill="none" stroke="#ff0000" stroke-width="1.1"/>
<path d="M1265.0,296.5 L1276.5,296.5 M1276.5,296.5 L1276.5,270.5 Q1276.5,265.5 1281.5,265.5 L1280.0,265.5 M1276.5,296.5 L1276.5,291.5 Q1276.5,286.5 1281.5,286.5 L1280.0,286.5 M1276.5,296.5 L1276.5,301.5 Q1276.5,306.5 1281.5,306.5 L1280.0,306.5 M1276.5,296.5 L1276.5,322.5 Q1276.5,327.5 1281.5,327.5 L1280.0,327.5" fill="none" stroke="#ff0000" stroke-width="1.1"/>
<rect x="1225.5" y="288.5" width="39.0" height="16.0" rx="8.2" fill="#fff" stroke="#ff0000" stroke-width="1.2"/>
<text x="1245.2" y="299.1" text-anchor="middle" font-size="7.9" stroke="#111" stroke-width="0.22">강장자</text>
<rect x="1280.5" y="257.5" width="166.0" height="15.0" rx="8.0" fill="#fff" stroke="#ff0000" stroke-width="1.2"/>
<text x="1363.5" y="267.9" text-anchor="middle" font-size="7.9" stroke="#111" stroke-width="0.22">대부분은 바다에 살고, 소수는 담수에 산다.</text>
<rect x="1280.5" y="278.5" width="48.0" height="15.0" rx="8.0" fill="#fff" stroke="#ff0000" stroke-width="1.2"/>
<text x="1304.5" y="288.9" text-anchor="middle" font-size="7.9" stroke="#111" stroke-width="0.22">주요 기능</text>
<rect x="1280.5" y="298.5" width="72.0" height="15.0" rx="7.8" fill="#fff" stroke="#ff0000" stroke-width="1.2"/>
<text x="1316.5" y="309.1" text-anchor="middle" font-size="7.9" stroke="#111" stroke-width="0.22">동물을 표현하다</text>
<rect x="1280.5" y="319.5" width="64.0" height="15.0" rx="7.8" fill="#fff" stroke="#ff0000" stroke-width="1.2"/>
<text x="1312.5" y="330.1" text-anchor="middle" font-size="7.9" stroke="#111" stroke-width="0.22">인간과의 관계</text>
<path d="M1265.0,378.5 L1276.5,378.5 M1276.5,378.5 L1276.5,353.5 Q1276.5,348.5 1281.5,348.5 L1280.0,348.5 M1276.5,378.5 L1276.5,373.5 Q1276.5,368.5 1281.5,368.5 L1280.0,368.5 M1276.5,378.5 L1276.5,384.5 Q1276.5,389.5 1281.5,389.5 L1280.0,389.5 M1276.5,378.5 L1276.5,405.5 Q1276.5,410.5 1281.5,410.5 L1280.0,410.5" fill="none" stroke="#ff0000" stroke-width="1.1"/>
<rect x="1225.5" y="370.5" width="39.0" height="16.0" rx="8.2" fill="#fff" stroke="#ff0000" stroke-width="1.2"/>
<text x="1245.2" y="381.1" text-anchor="middle" font-size="7.9" stroke="#111" stroke-width="0.22">편모충</text>
<rect x="1280.5" y="340.5" width="142.0" height="15.0" rx="8.0" fill="#fff" stroke="#ff0000" stroke-width="1.2"/>
<text x="1351.5" y="350.9" text-anchor="middle" font-size="7.9" stroke="#111" stroke-width="0.22">대부분은 사람이나 동물에 기생한다.</text>
<rect x="1280.5" y="360.5" width="48.0" height="15.0" rx="8.0" fill="#fff" stroke="#ff0000" stroke-width="1.2"/>
<text x="1304.5" y="370.9" text-anchor="middle" font-size="7.9" stroke="#111" stroke-width="0.22">주요 기능</text>
<rect x="1280.5" y="381.5" width="72.0" height="16.0" rx="8.2" fill="#fff" stroke="#ff0000" stroke-width="1.2"/>
<text x="1316.5" y="392.1" text-anchor="middle" font-size="7.9" stroke="#111" stroke-width="0.22">동물을 표현하다</text>
<rect x="1280.5" y="402.5" width="64.0" height="15.0" rx="8.0" fill="#fff" stroke="#ff0000" stroke-width="1.2"/>
<text x="1312.5" y="412.9" text-anchor="middle" font-size="7.9" stroke="#111" stroke-width="0.22">인간과의 관계</text>
<g transform="translate(1149,318)" fill="none" stroke-linecap="round">
<path d="M24.7,2.5 C24.5,10 24,18 21,26 C20,30 21,34 21.5,38.5 M11.5,9 L23.5,9.5 M2,21.5 C7,25 13,27 20,26 M9.5,24 C10,22 11,20.5 11.5,20 M20.5,27 C26,22 32,18 38.3,16.2 M27,23 C31,24 35,24 37.8,24" stroke="#fff" stroke-width="6"/>
<path d="M24.7,2.5 C24.5,10 24,18 21,26 C20,30 21,34 21.5,38.5 M11.5,9 L23.5,9.5 M2,21.5 C7,25 13,27 20,26 M9.5,24 C10,22 11,20.5 11.5,20 M20.5,27 C26,22 32,18 38.3,16.2 M27,23 C31,24 35,24 37.8,24" stroke="#2a2a2a" stroke-width="4.6"/>
<path d="M24.7,2.5 C24.5,10 24,18 21,26 C20,30 21,34 21.5,38.5 M11.5,9 L23.5,9.5 M2,21.5 C7,25 13,27 20,26 M9.5,24 C10,22 11,20.5 11.5,20 M20.5,27 C26,22 32,18 38.3,16.2 M27,23 C31,24 35,24 37.8,24" stroke="#9ad881" stroke-width="3.1"/>
</g>
<rect x="911" y="511" width="199" height="51" rx="25.5" fill="#7a007a"/>
<text x="987" y="538.5" text-anchor="middle" font-size="12" font-weight="bold" fill="#fff" stroke="#fff" stroke-width="0.25" letter-spacing="-0.35">연체동물과 절지동물</text>
<path d="M1110.0,536.5 L1120.5,536.5 M1120.5,536.5 L1120.5,485.5 Q1120.5,480.5 1125.5,480.5 L1123.5,480.5 M1120.5,536.5 L1120.5,587.5 Q1120.5,592.5 1125.5,592.5 L1123.5,592.5" fill="none" stroke="#7a007a" stroke-width="1.1"/>
<path d="M1171.0,480.5 L1182.5,480.5 M1182.5,480.5 L1182.5,454.5 Q1182.5,449.5 1187.5,449.5 L1186.0,449.5 M1182.5,480.5 L1182.5,474.5 Q1182.5,469.5 1187.5,469.5 L1186.0,469.5 M1182.5,480.5 L1182.5,485.5 Q1182.5,490.5 1187.5,490.5 L1186.0,490.5 M1182.5,480.5 L1182.5,506.5 Q1182.5,511.5 1187.5,511.5 L1186.0,511.5" fill="none" stroke="#7a007a" stroke-width="1.1"/>
<rect x="1123.5" y="472.5" width="47.0" height="16.0" rx="8.2" fill="#fff" stroke="#7a007a" stroke-width="1.2"/>
<text x="1147.2" y="483.1" text-anchor="middle" font-size="7.9" stroke="#111" stroke-width="0.22">연체동물</text>
<rect x="1186.5" y="441.5" width="341.0" height="15.0" rx="8.0" fill="#fff" stroke="#7a007a" stroke-width="1.2"/>
<text x="1357.0" y="451.9" text-anchor="middle" font-size="7.9" stroke="#111" stroke-width="0.22">현재 알려진 연체동물 종은 <tspan font-size="8.9">100</tspan>,<tspan font-size="8.9">000</tspan>종이 넘으며, 이는 동물계에서 두 번째로 큰 그룹입니다.</text>
<rect x="1186.5" y="461.5" width="49.0" height="16.0" rx="8.2" fill="#fff" stroke="#7a007a" stroke-width="1.2"/>
<text x="1211.0" y="472.6" text-anchor="middle" font-size="7.9" stroke="#111" stroke-width="0.22">주요 기능</text>
<rect x="1186.5" y="482.5" width="72.0" height="16.0" rx="8.2" fill="#fff" stroke="#7a007a" stroke-width="1.2"/>
<text x="1222.5" y="493.6" text-anchor="middle" font-size="7.9" stroke="#111" stroke-width="0.22">동물을 표현하다</text>
<rect x="1186.5" y="503.5" width="64.0" height="16.0" rx="8.5" fill="#fff" stroke="#7a007a" stroke-width="1.2"/>
<text x="1218.5" y="514.4" text-anchor="middle" font-size="7.9" stroke="#111" stroke-width="0.22">인간과의 관계</text>
<path d="M1171.0,592.5 L1182.5,592.5 M1182.5,592.5 L1182.5,542.5 Q1182.5,537.5 1187.5,537.5 L1186.0,537.5 M1182.5,592.5 L1182.5,569.5 Q1182.5,564.5 1187.5,564.5 L1186.0,564.5 M1182.5,592.5 L1182.5,590.5 Q1182.5,585.5 1187.5,585.5 L1186.0,585.5 M1182.5,592.5 L1182.5,600.5 Q1182.5,605.5 1187.5,605.5 L1186.0,605.5 M1182.5,592.5 L1182.5,621.5 Q1182.5,626.5 1187.5,626.5 L1186.0,626.5 M1182.5,592.5 L1182.5,642.5 Q1182.5,647.5 1187.5,647.5 L1186.0,647.5" fill="none" stroke="#7a007a" stroke-width="1.1"/>
<rect x="1123.5" y="584.5" width="47.0" height="16.0" rx="8.2" fill="#fff" stroke="#7a007a" stroke-width="1.2"/>
<text x="1147.2" y="595.1" text-anchor="middle" font-size="7.9" stroke="#111" stroke-width="0.22">절지동물</text>
<rect x="1186.5" y="523.5" width="370.0" height="28.0" rx="8.5" fill="#fff" stroke="#7a007a" stroke-width="1.2"/>
<text x="1199.7" y="534.5" font-size="7.9" stroke="#111" stroke-width="0.22">이는 알려진 모든 동물 종의 <tspan font-size="8.9">80%</tspan>를 차지하는 <tspan font-size="8.9">120</tspan>만 종 이상의 명명된 종이 있는 가장 큰 동물 그</text>
<text x="1199.7" y="546.3" font-size="7.9" stroke="#111" stroke-width="0.22">룹입니다.</text>
<rect x="1186.5" y="556.5" width="49.0" height="16.0" rx="8.0" fill="#fff" stroke="#7a007a" stroke-width="1.2"/>
<text x="1211.0" y="567.4" text-anchor="middle" font-size="7.9" stroke="#111" stroke-width="0.22">주요 기능</text>
<rect x="1186.5" y="577.5" width="72.0" height="15.0" rx="8.0" fill="#fff" stroke="#7a007a" stroke-width="1.2"/>
<text x="1222.5" y="587.9" text-anchor="middle" font-size="7.9" stroke="#111" stroke-width="0.22">동물을 표현하다</text>
<rect x="1186.5" y="598.5" width="30.0" height="15.0" rx="7.8" fill="#fff" stroke="#7a007a" stroke-width="1.2"/>
<text x="1201.5" y="608.6" text-anchor="middle" font-size="7.9" stroke="#111" stroke-width="0.22">분류</text>
<rect x="1186.5" y="618.5" width="30.0" height="16.0" rx="8.0" fill="#fff" stroke="#7a007a" stroke-width="1.2"/>
<text x="1201.5" y="629.4" text-anchor="middle" font-size="7.9" stroke="#111" stroke-width="0.22">곤충</text>
<rect x="1186.5" y="639.5" width="64.0" height="15.0" rx="8.0" fill="#fff" stroke="#7a007a" stroke-width="1.2"/>
<text x="1218.5" y="649.9" text-anchor="middle" font-size="7.9" stroke="#111" stroke-width="0.22">인간과의 관계</text>
<g transform="translate(1048,517)" stroke-linejoin="round">
<path d="M14,0.5 L20.5,0.5 L37.6,15 C39,17 39,20 37.6,21 L32,26 L28,36.7 C25,39 21,39.3 18.7,39 L10.7,37.3 C7,35 4.5,32 3.8,28 L1,18.4 C1,14 1.5,12 2,10.4 C4,7 6,5 14,0.5Z" fill="#c5d5da" stroke="#fff" stroke-width="2.4"/>
<path d="M14,0.5 L20.5,0.5 L37.6,15 C39,17 39,20 37.6,21 L32,26 L28,36.7 C25,39 21,39.3 18.7,39 L10.7,37.3 C7,35 4.5,32 3.8,28 L1,18.4 C1,14 1.5,12 2,10.4 C4,7 6,5 14,0.5Z" fill="#c5d5da" stroke="#4a3a2a" stroke-width="0.9"/>
<path d="M8.4,4.6 L33.6,15.8 M1.8,16.1 L33.6,19.3 M4,28.4 L30.7,22.4 M11.8,37.3 L32.5,25.3" stroke="#4a3a2a" stroke-width="0.9"/>
</g>
<rect x="911" y="770" width="126" height="51" rx="25.5" fill="#02008a"/>
<text x="952" y="797.5" text-anchor="middle" font-size="12" font-weight="bold" fill="#fff" stroke="#fff" stroke-width="0.25" letter-spacing="-0.35">물고기</text>
<path d="M1037.0,795.5 L1047.5,795.5 M1047.5,795.5 L1047.5,742.5 Q1047.5,737.5 1052.5,737.5 L1051.0,737.5 M1047.5,795.5 L1047.5,810.5 Q1047.5,815.5 1052.5,815.5 L1051.0,815.5 M1047.5,795.5 L1047.5,847.5 Q1047.5,852.5 1052.5,852.5 L1051.0,852.5" fill="none" stroke="#02008a" stroke-width="1.1"/>
<path d="M1255.5,737.5 L1266.5,737.5 M1266.5,737.5 L1266.5,691.5 Q1266.5,686.5 1271.5,686.5 L1270.0,686.5 M1266.5,737.5 L1266.5,711.5 Q1266.5,706.5 1271.5,706.5 L1270.0,706.5 M1266.5,737.5 L1266.5,732.5 Q1266.5,727.5 1271.5,727.5 L1270.0,727.5 M1266.5,737.5 L1266.5,742.5 Q1266.5,747.5 1271.5,747.5 L1270.0,747.5 M1266.5,737.5 L1266.5,763.5 Q1266.5,768.5 1271.5,768.5 L1270.0,768.5 M1266.5,737.5 L1266.5,784.5 Q1266.5,789.5 1271.5,789.5 L1270.0,789.5" fill="none" stroke="#02008a" stroke-width="1.1"/>
<rect x="1051.5" y="729.5" width="204.0" height="16.0" rx="8.0" fill="#fff" stroke="#02008a" stroke-width="1.2"/>
<text x="1153.2" y="740.4" text-anchor="middle" font-size="7.9" stroke="#111" stroke-width="0.22">수중생활에 적합한 붕어의 형태적 구조와 생리적 특성</text>
<rect x="1270.5" y="678.5" width="32.0" height="15.0" rx="7.8" fill="#fff" stroke="#02008a" stroke-width="1.2"/>
<text x="1286.2" y="689.1" text-anchor="middle" font-size="7.9" stroke="#111" stroke-width="0.22">체색</text>
<rect x="1270.5" y="699.5" width="32.0" height="15.0" rx="7.8" fill="#fff" stroke="#02008a" stroke-width="1.2"/>
<text x="1286.2" y="709.6" text-anchor="middle" font-size="7.9" stroke="#111" stroke-width="0.22">체형</text>
<rect x="1270.5" y="719.5" width="49.0" height="15.0" rx="8.0" fill="#fff" stroke="#02008a" stroke-width="1.2"/>
<text x="1295.0" y="729.9" text-anchor="middle" font-size="7.9" stroke="#111" stroke-width="0.22">신체 표면</text>
<rect x="1270.5" y="739.5" width="47.0" height="16.0" rx="8.2" fill="#fff" stroke="#02008a" stroke-width="1.2"/>
<text x="1293.8" y="750.6" text-anchor="middle" font-size="7.9" stroke="#111" stroke-width="0.22">지느러미</text>
<rect x="1270.5" y="760.5" width="38.0" height="16.0" rx="8.2" fill="#fff" stroke="#02008a" stroke-width="1.2"/>
<text x="1289.5" y="771.1" text-anchor="middle" font-size="7.9" stroke="#111" stroke-width="0.22">아가미</text>
<rect x="1270.5" y="781.5" width="47.0" height="16.0" rx="8.2" fill="#fff" stroke="#02008a" stroke-width="1.2"/>
<text x="1293.8" y="792.1" text-anchor="middle" font-size="7.9" stroke="#111" stroke-width="0.22">이성적인</text>
<path d="M1101,815.5 L1116.5,815.5" stroke="#02008a" stroke-width="1.1"/>
<rect x="1051.5" y="807.5" width="49.0" height="16.0" rx="8.5" fill="#fff" stroke="#02008a" stroke-width="1.2"/>
<text x="1076.0" y="818.4" text-anchor="middle" font-size="7.9" stroke="#111" stroke-width="0.22">주요 기능</text>
<rect x="1116.5" y="801.5" width="371.0" height="28.0" rx="8.5" fill="#fff" stroke="#02008a" stroke-width="1.2"/>
<text x="1129.0" y="812.5" font-size="7.9" stroke="#111" stroke-width="0.22">물속에 살면서 몸의 표면이 비늘로 덮여 있는 경우가 많고, 아가미로 숨을 쉬며, 꼬리와 몸통의 흔들</text>
<text x="1129.0" y="824.3" font-size="7.9" stroke="#111" stroke-width="0.22">림과 지느러미의 협응을 통해 헤엄칩니다.</text>
<path d="M1124.0,852.5 L1136.5,852.5 M1136.5,852.5 L1136.5,847.5 Q1136.5,842.5 1141.5,842.5 L1139.5,842.5 M1136.5,852.5 L1136.5,858.5 Q1136.5,863.5 1141.5,863.5 L1139.5,863.5" fill="none" stroke="#02008a" stroke-width="1.1"/>
<rect x="1051.5" y="843.5" width="72.0" height="17.0" rx="8.5" fill="#fff" stroke="#02008a" stroke-width="1.2"/>
<text x="1087.5" y="855.1" text-anchor="middle" font-size="7.9" stroke="#111" stroke-width="0.22">동물을 표현하다</text>
<rect x="1139.5" y="834.5" width="47.0" height="16.0" rx="8.2" fill="#fff" stroke="#02008a" stroke-width="1.2"/>
<text x="1163.2" y="845.1" text-anchor="middle" font-size="7.9" stroke="#111" stroke-width="0.22">민물고기</text>
<rect x="1139.5" y="855.5" width="57.0" height="16.0" rx="8.2" fill="#fff" stroke="#02008a" stroke-width="1.2"/>
<text x="1168.2" y="866.1" text-anchor="middle" font-size="7.9" stroke="#111" stroke-width="0.22">바다 물고기</text>
<g transform="translate(975,776)" stroke-linejoin="round">
<path d="M0.5,20 C3,13 8,9 13.7,7.3 L20,0.8 L19.7,8.8 C23.5,11 26.5,14.5 29.4,18.8 C32,13 35.5,10.5 39.5,9.6 C37,13 35,17 35,20 C35,24 37,27.5 39.5,30.3 C35.5,29.5 32,27 29.4,22.3 C26.5,26.5 23.5,29.5 19.4,31.4 L19.5,38.9 L13,32.6 C8,31 3,27 0.5,20Z" fill="#c5d5da" stroke="#fff" stroke-width="2.4"/>
<path d="M0.5,20 C3,13 8,9 13.7,7.3 L20,0.8 L19.7,8.8 C23.5,11 26.5,14.5 29.4,18.8 C32,13 35.5,10.5 39.5,9.6 C37,13 35,17 35,20 C35,24 37,27.5 39.5,30.3 C35.5,29.5 32,27 29.4,22.3 C26.5,26.5 23.5,29.5 19.4,31.4 L19.5,38.9 L13,32.6 C8,31 3,27 0.5,20Z" fill="#c5d5da" stroke="#4a3a2a" stroke-width="0.9"/>
<ellipse cx="8.5" cy="18.2" rx="1.3" ry="1.7" fill="#fff" stroke="#000" stroke-width="1.3"/>
</g>
<rect x="1184.5" y="521.5" width="375.5" height="32" fill="none" stroke="#a9c8f5" stroke-width="1.2"/>
</svg>
<div class="abs" style="left:512px;top:1005px;width:560px;height:8px;border-radius:4px;background:#cfcfcf"></div>
<div class="abs" style="left:1612px;top:375px;width:8px;height:341px;border-radius:4px;background:#cfcfcf"></div>
<div class="abs" style="left:55px;top:948px;width:35px;height:35px;border-radius:50%;background:#fff;box-shadow:0 3px 9px rgba(0,0,0,0.2)"></div>
<svg class="abs" style="left:55px;top:948px" width="35" height="35"><defs><linearGradient id="gt" x1="0" y1="0" x2="0" y2="1"><stop offset="0" stop-color="#5ee8f0"/><stop offset="1" stop-color="#00d6a8"/></linearGradient><linearGradient id="gp" x1="0" y1="0" x2="0" y2="1"><stop offset="0" stop-color="#ff1fc0"/><stop offset="1" stop-color="#ffb890"/></linearGradient></defs>
<path d="M7,25.5 L13,10 L18.5,10 L12.5,25.5Z" fill="url(#gt)"/><path d="M21.5,21.5 L24.5,25.5 L20.5,25.5Z" fill="#20e0d0"/><path d="M15.8,25.5 L21.9,10 L26.9,10 L21,25.5Z" fill="url(#gp)"/><path d="M18.5,10.2 L20.2,12.8 L17.6,19 L16.4,15.8Z" fill="#1070d0"/></svg>
<div id="panel"></div>
<div class="abs" style="left:1622px;top:122px;width:59px;height:38px;background:#dff0ea"></div>
<div class="abs" style="left:1622px;top:157px;width:59px;height:3px;background:#1db47f"></div>
<div class="abs" style="left:1622px;top:160px;width:296px;height:1px;background:#e2e2e2"></div>
<div class="abs" style="left:1597px;top:122px;width:25px;height:50px;background:#f4f4f4;border:1px solid #e2e2e2;border-right:none;border-radius:8px 0 0 8px"></div>
<svg class="abs" style="left:1602px;top:139px" width="14" height="16"><path d="M4,2 L10,8 L4,14" fill="none" stroke="#444" stroke-width="1.6"/></svg>
<svg class="abs" style="left:1636px;top:124px" width="270" height="34" viewBox="0 0 270 34" fill="none">
<rect x="6" y="6" width="18" height="18" rx="5" stroke="#1db47f" stroke-width="2"/><rect x="11" y="12" width="8" height="6" rx="1" stroke="#1db47f" stroke-width="2"/>
<path d="M74,8 Q75.6,15 83.5,16.8 Q75.6,18.6 74,25.5 Q72.4,18.6 64.5,16.8 Q72.4,15 74,8Z" stroke="#222" stroke-width="1.9" stroke-linejoin="round"/><path d="M65.3,5 C65.5,6.5 66,7 67.5,7.2 C66,7.4 65.5,8 65.3,9.4 C65.1,8 64.6,7.4 63.1,7.2 C64.6,7 65.1,6.5 65.3,5Z M82.5,22 C82.7,23.5 83.2,24 84.7,24.2 C83.2,24.4 82.7,25 82.5,26.4 C82.3,25 81.8,24.4 80.3,24.2 C81.8,24 82.3,23.5 82.5,22Z" fill="#222" stroke="#222" stroke-width="0.8"/>
<path d="M133,27 C127,22 124,18.5 124,14.5 C124,10 128,7.5 133,7.5 C138,7.5 142,10 142,14.5 C142,18.5 139,22 133,27Z" stroke="#222" stroke-width="1.9" stroke-linejoin="round"/><circle cx="130.2" cy="12.8" r="1" fill="#222"/><circle cx="135.8" cy="12.8" r="1" fill="#222"/><path d="M129.8,16.3 C131.5,18.3 134.5,18.3 136.2,16.3" stroke="#222" stroke-width="1.7" stroke-linecap="round"/>
<path d="M187.59,10.23 A4.6,4.6 0 0 1 196.41,10.23 A4.6,4.6 0 0 1 199.13,18.62 A4.6,4.6 0 0 1 192.00,23.80 A4.6,4.6 0 0 1 184.87,18.62 A4.6,4.6 0 0 1 187.59,10.23Z" stroke="#222" stroke-width="1.9" stroke-linejoin="round"/><circle cx="192" cy="16.3" r="2.6" stroke="#222" stroke-width="1.9"/>
<path d="M250.5,7.5 A9.3,9.3 0 0 0 250.5,26.1" stroke="#222" stroke-width="1.9"/><path d="M250.5,7.5 A9.3,9.3 0 0 1 250.5,26.1" stroke="#222" stroke-width="1.9" stroke-dasharray="2.6 2.4"/><path d="M250,12 V17 L254,19.5" stroke="#222" stroke-width="1.9" stroke-linecap="round" stroke-linejoin="round"/>
</svg>
<div class="pl" style="left:1637px;top:175px;font-size:13px">레이아웃</div>
<div class="pl" style="left:1637px;top:221px">레이아웃</div>
<div class="box" style="left:1790px;top:206px;width:88px;height:46px"></div>
<svg class="abs" style="left:1796px;top:215px" width="60" height="28"><rect x="3" y="2.5" width="7.5" height="3.5" rx="1.5" fill="#c8c8c8"/><rect x="31" y="2.5" width="7.5" height="3.5" rx="1.5" fill="#c8c8c8"/><rect x="3" y="21.5" width="7.5" height="3.5" rx="1.5" fill="#c8c8c8"/><rect x="31" y="21.5" width="7.5" height="3.5" rx="1.5" fill="#c8c8c8"/><path d="M10.5,4 C13,4 13,6 13,9 M31,4 C28.5,4 28.5,6 28.5,9 M10.5,23.5 C13,23.5 13,21 13,19 M31,23.5 C28.5,23.5 28.5,21 28.5,19" fill="none" stroke="#d0d0d0" stroke-width="0.8"/><rect x="14" y="9" width="14" height="9.5" rx="2" fill="#ff6a13"/><path d="M7,11 V17 M5.5,12.5 L7,11 L8.5,12.5 M35,11 V17 M33.5,15.5 L35,17 L36.5,15.5" fill="none" stroke="#777" stroke-width="0.9"/></svg>
<div class="chev" style="left:1860px;top:224px"></div>
<div class="pl" style="left:1637px;top:271px">토픽 간격</div>
<div class="pl" style="left:1637px;top:309px">가로</div>
<div class="box" style="left:1667px;top:305px;width:56px;height:24px;border-radius:5px"></div>
<div class="pl" style="left:1676px;top:310px">30</div>
<svg class="abs" style="left:1705px;top:308px" width="14" height="18"><path d="M2,1 V17" stroke="#e2e2e2"/><path d="M6,6 L8.5,3 L11,6Z M6,12 L8.5,15 L11,12Z" fill="#333"/></svg>
<div class="pl" style="left:1792px;top:309px">세로</div>
<div class="box" style="left:1822px;top:305px;width:56px;height:24px;border-radius:5px"></div>
<div class="pl" style="left:1831px;top:310px">30</div>
<svg class="abs" style="left:1860px;top:308px" width="14" height="18"><path d="M2,1 V17" stroke="#e2e2e2"/><path d="M6,6 L8.5,3 L11,6Z M6,12 L8.5,15 L11,12Z" fill="#333"/></svg>
<div class="cb" style="left:1637px;top:347px"></div><div class="pl" style="left:1658px;top:346px">자유롭게 브랜치 이동하기</div>
<div class="cb" style="left:1637px;top:382px"></div><div class="pl" style="left:1658px;top:381px">관련 주제와 맞추기</div>
<div class="cb" style="left:1637px;top:418px"></div><div class="pl" style="left:1658px;top:417px">자동 테마 그룹화 사용 안 함</div>
<div class="cb" style="left:1637px;top:451px"></div><div class="pl" style="left:1658px;top:450px">주제 겹치기</div>
<div class="abs" style="left:1637px;top:482px;width:257px;height:1px;background:#e0e0e0"></div>
<div class="pl" style="left:1637px;top:496px;font-size:13px">테마</div>
<div class="pl" style="left:1637px;top:542px">테마</div>
<div class="box" style="left:1791px;top:526px;width:87px;height:47px"></div>
<svg class="abs" style="left:1800px;top:526px" width="55" height="30"><path d="M20,12 C26,12 26,5 32,5 M20,12 H32 M20,12 C26,12 26,19 32,19" stroke="#b9a0e6" stroke-width="1.5" fill="none"/><ellipse cx="15" cy="12" rx="8" ry="4.5" fill="#5b6ef0"/><rect x="31" y="2" width="12" height="5" rx="2" fill="#b070e0"/><rect x="31" y="9.5" width="12" height="5" rx="2" fill="#5aa0f0"/><rect x="31" y="17" width="12" height="5" rx="2" fill="#4fbf8f"/><rect x="45" y="3" width="6" height="3" rx="1" fill="none" stroke="#b070e0" stroke-width="0.8"/><rect x="45" y="18" width="6" height="3" rx="1" fill="none" stroke="#4fbf8f" stroke-width="0.8"/></svg>
<div class="chev" style="left:1860px;top:545px"></div>
<div class="pl" style="left:1637px;top:594px">컬러 브랜치</div>
<div class="abs" style="left:1754px;top:591px;width:22px;height:23px;border:1.5px solid #333;border-radius:3px;background:#fff;overflow:hidden"><div style="position:absolute;left:0.5px;top:0.5px;width:8.5px;height:5.5px;background:#1db47f"></div><div style="position:absolute;left:10.5px;top:0.5px;width:8.5px;height:5.5px;background:#1db47f"></div><div style="position:absolute;left:0.5px;top:7.2px;width:8.5px;height:5.5px;background:#1db47f"></div><div style="position:absolute;left:10.5px;top:7.2px;width:8.5px;height:5.5px;background:#1db47f"></div><div style="position:absolute;left:0.5px;top:13.9px;width:8.5px;height:5.5px;background:#1db47f"></div><div style="position:absolute;left:10.5px;top:13.9px;width:8.5px;height:5.5px;background:#1db47f"></div></div>
<div class="abs" style="left:1781px;top:586px;width:30px;height:31px;border:1.5px solid #d8d8d8;border-radius:5px;background:#eee"></div>
<div class="abs" style="left:1785px;top:591px;width:22px;height:23px;border:1.5px solid #333;border-radius:3px;background:#fff;overflow:hidden"><div style="position:absolute;left:0.5px;top:0.5px;width:8.5px;height:5.5px;background:#29c48a"></div><div style="position:absolute;left:10.5px;top:0.5px;width:8.5px;height:5.5px;background:#a070f0"></div><div style="position:absolute;left:0.5px;top:7.2px;width:8.5px;height:5.5px;background:#f0c030"></div><div style="position:absolute;left:10.5px;top:7.2px;width:8.5px;height:5.5px;background:#ff7a30"></div><div style="position:absolute;left:0.5px;top:13.9px;width:8.5px;height:5.5px;background:#4aa0f0"></div><div style="position:absolute;left:10.5px;top:13.9px;width:8.5px;height:5.5px;background:#e05050"></div></div>
<div class="abs" style="left:1816px;top:591px;width:22px;height:23px;border:1.5px solid #333;border-radius:3px;background:#fff;overflow:hidden"><div style="position:absolute;left:0.5px;top:0.5px;width:8.5px;height:5.5px;background:#1db47f"></div><div style="position:absolute;left:10.5px;top:0.5px;width:8.5px;height:5.5px;background:#ff7a30"></div><div style="position:absolute;left:0.5px;top:7.2px;width:8.5px;height:5.5px;background:#4aa0f0"></div><div style="position:absolute;left:10.5px;top:7.2px;width:8.5px;height:5.5px;background:#1db47f"></div><div style="position:absolute;left:0.5px;top:13.9px;width:8.5px;height:5.5px;background:#ff7a30"></div><div style="position:absolute;left:10.5px;top:13.9px;width:8.5px;height:5.5px;background:#4aa0f0"></div></div>
<div class="abs" style="left:1847px;top:591px;width:22px;height:23px;border:1.5px solid #333;border-radius:3px;background:#fff;overflow:hidden"><div style="position:absolute;left:0.5px;top:0.5px;width:8.5px;height:5.5px;background:#1db47f"></div><div style="position:absolute;left:10.5px;top:0.5px;width:8.5px;height:5.5px;background:#4aa0f0"></div><div style="position:absolute;left:0.5px;top:7.2px;width:8.5px;height:5.5px;background:#1db47f"></div><div style="position:absolute;left:10.5px;top:7.2px;width:8.5px;height:5.5px;background:#4aa0f0"></div><div style="position:absolute;left:0.5px;top:13.9px;width:8.5px;height:5.5px;background:#1db47f"></div><div style="position:absolute;left:10.5px;top:13.9px;width:8.5px;height:5.5px;background:#4aa0f0"></div></div>
<div class="pl" style="left:1637px;top:636px">테마 색상</div>
<div class="box" style="left:1750px;top:630px;width:128px;height:28px"></div>
<div class="abs" style="left:1757px;top:636px;height:9px;display:flex"><div style="width:9.6px;height:9px;background:#2626a6"></div><div style="width:9.6px;height:9px;background:#ff0000"></div><div style="width:9.6px;height:9px;background:#7a007a"></div><div style="width:9.6px;height:9px;background:#02008a"></div><div style="width:9.6px;height:9px;background:#c8612c"></div><div style="width:9.6px;height:9px;background:#06800f"></div><div style="width:9.6px;height:9px;background:#0e8f8a"></div><div style="width:9.6px;height:9px;background:#ff6d00"></div><div style="width:9.6px;height:9px;background:#e0508a"></div><div style="width:9.6px;height:9px;background:#7a9a2a"></div></div>
<div class="chev" style="left:1860px;top:640px"></div>
<div class="pl" style="left:1637px;top:676px">테마 글꼴</div>
<div class="box" style="left:1750px;top:670px;width:128px;height:28px"></div>
<div class="pl" style="left:1756px;top:673px;font-size:7px">Aa</div>
<div class="pl" style="left:1782px;top:677px;font-size:12.5px;color:#222">Noto sans KR</div>
<div class="chev" style="left:1862px;top:681px;width:5px;height:5px"></div>
<div class="pl" style="left:1637px;top:726px">매직 핸드 드로잉</div>
<div class="box" style="left:1791px;top:711px;width:87px;height:47px"></div>
<div class="abs" style="left:1798px;top:712px;width:62px;height:32px;border:1px solid #eee;border-radius:4px;background:#fff"></div>
<div class="abs" style="left:1808px;top:717px;width:42px;height:21px;border-radius:3px;background:#222"></div>
<div class="chev" style="left:1860px;top:729px"></div>
<div class="abs" style="left:1637px;top:770px;width:257px;height:1px;background:#e0e0e0"></div>
<div class="pl" style="left:1637px;top:784px;font-size:13px">배경</div>
<div class="box" style="left:1637px;top:818px;width:241px;height:55px"></div>
<div class="abs" style="left:1642px;top:823px;width:55px;height:45px;background:#e3f5ee;border-radius:6px"></div>
<svg class="abs" style="left:1650px;top:827.5px" width="230" height="20">
<rect x="11" y="2" width="15" height="15" rx="2" fill="none" stroke="#333" stroke-width="1.5"/><path d="M12,16 L25,3" stroke="#333" stroke-width="1.5"/>
<rect x="70" y="2" width="15" height="15" rx="2" fill="none" stroke="#333" stroke-width="1.5"/><rect x="73" y="5" width="9" height="9" fill="#1db47f"/>
<rect x="129" y="2" width="15" height="15" rx="2" fill="none" stroke="#333" stroke-width="1.5"/><rect x="132" y="5" width="9" height="9" fill="#1db47f"/><path d="M132,12 L138,5 M135,14 L141,7" stroke="#fff" stroke-width="1.2"/>
<rect x="188" y="2" width="15" height="15" rx="2" fill="none" stroke="#333" stroke-width="1.5"/><path d="M189,15 L194,9 L198,13 L202,10" fill="none" stroke="#333" stroke-width="1.3"/><circle cx="198" cy="6.5" r="1.5" fill="none" stroke="#333" stroke-width="1"/>
</svg>
<div class="pl" style="left:1657px;top:852px;font-size:11.5px;font-weight:bold;color:#1db47f">없음</div>
<div class="pl" style="left:1716px;top:852px;font-size:11.5px">색상</div>
<div class="pl" style="left:1769px;top:852px;font-size:11.5px">텍스처</div>
<div class="pl" style="left:1828px;top:852px;font-size:11.5px">이미지</div>
<div class="cb" style="left:1637px;top:897px"></div><div class="pl" style="left:1658px;top:896px">워터마크 삽입</div>
<div id="status"></div>
<svg class="abs" style="left:6px;top:1020px" width="240" height="22" fill="none" stroke="#444" stroke-width="1.2">
<path d="M4,5 H18 M4,10 H11 M4,15 H11"/><circle cx="15.5" cy="13" r="3"/><path d="M15.5,16 V18"/>
<path d="M34,5 H35 V16 H34 M39,5 H48 V16 H39Z M52,5 H53 V16 H52" />
<path d="M64,2 V20" stroke="#ddd"/>
<path d="M172,2 V20" stroke="#ddd"/>
<path d="M193,11 H205 M199,5 V17"/>
<path d="M227,2 V20" stroke="#ddd"/>
</svg>
<div class="abs" style="left:74px;top:1017px;width:100px;height:27px;background:#ececec;border-radius:4px"></div>
<div class="pl" style="left:81px;top:1023px;font-size:12px;color:#222">페이지-1</div>
<svg class="abs" style="left:160px;top:1027px" width="8" height="5"><path d="M0,0 H8 L4,4Z" fill="#666"/></svg>
<div class="pl" style="left:254px;top:1022px;font-size:12.5px;font-weight:bold;color:#1aa876">페이지-1</div>
<div class="abs" style="left:236px;top:1041px;width:88px;height:2px;background:#1db47f"></div>
<div class="abs" style="left:325px;top:1017px;width:1px;height:24px;background:#ddd"></div>
<div class="pl" style="left:1443px;top:1023px;font-size:12px;color:#222">개수: 79</div>
<svg class="abs" style="left:1500px;top:1019px" width="418" height="24" fill="none" stroke="#444" stroke-width="1.2">
<path d="M16,4 C20,4 22,8 22,12 C22,17 20,19 16,19 C12,19 10,17 10,12 C10,8 12,4 16,4Z M10,12 H22"/><path d="M16,4 C20,4 22,8 22,12 H16Z" fill="#444"/>
<path d="M36,6 L41,4 L46,6 L51,4 V17 L46,19 L41,17 L36,19Z M41,4 V17 M46,6 V19"/>
<circle cx="72" cy="12" r="7"/><path d="M70,9 L75,12 L70,15Z"/>
<rect x="92" y="5" width="14" height="14"/><rect x="95" y="8" width="8" height="8"/>
<rect x="120" y="5" width="14" height="14"/><path d="M123,8 L126,11 M131,8 L128,11 M123,16 L126,13 M131,16 L128,13"/>
<path d="M148,12 H156" />
<path d="M163,12 H182" stroke="#111" stroke-width="2.2"/><path d="M183,12 H262" stroke="#dcdcdc" stroke-width="1.5"/><circle cx="182" cy="12" r="4.6" fill="#fff" stroke="#111" stroke-width="2"/>
<path d="M268,12 H277 M272.5,7.5 V16.5"/>
<path d="M329,10 L332,13 L335,10" stroke="#888"/>
<path d="M354,9 V5 H358 M366,5 H370 V9 M370,15 V19 H366 M358,19 H354 V15"/>
<rect x="389" y="5" width="14" height="14"/><path d="M392,12 H400 M392,12 L394,10 M392,12 L394,14 M400,12 L398,10 M400,12 L398,14"/>
</svg>
<div class="pl" style="left:1793px;top:1023px;font-size:12.5px;color:#222">70%</div>
</body></html>
